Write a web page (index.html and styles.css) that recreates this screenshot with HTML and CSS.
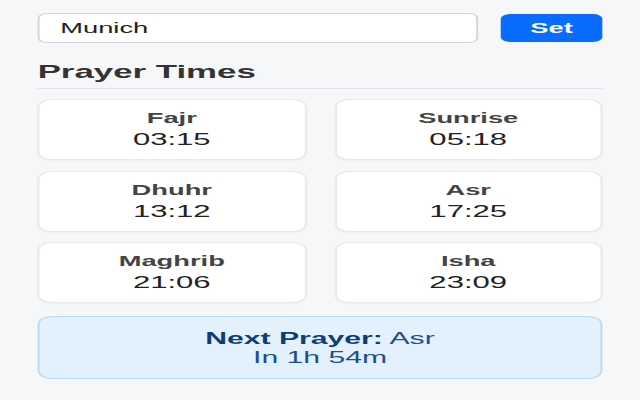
FILE: index.html
```
<!DOCTYPE html>
<html lang="en">
<head>
<meta charset="utf-8">
<title>Prayer Times</title>
<link rel="stylesheet" href="styles.css">
</head>
<body>
<div class="app">
  <div class="city-row">
    <input class="city-input" type="text" value="Munich">
    <button class="set-btn">Set</button>
  </div>
  <h2 class="title">Prayer Times</h2>
  <div class="grid">
    <div class="card"><div class="name">Fajr</div><div class="time">03:15</div></div>
    <div class="card"><div class="name">Sunrise</div><div class="time">05:18</div></div>
    <div class="card"><div class="name">Dhuhr</div><div class="time">13:12</div></div>
    <div class="card"><div class="name">Asr</div><div class="time">17:25</div></div>
    <div class="card"><div class="name">Maghrib</div><div class="time">21:06</div></div>
    <div class="card"><div class="name">Isha</div><div class="time">23:09</div></div>
  </div>
  <div class="next">
    <div class="next-line"><strong>Next Prayer:</strong> Asr</div>
    <div class="next-line">In 1h 54m</div>
  </div>
</div>
</body>
</html>
```
FILE: styles.css
```
html, body {
  margin: 0;
  padding: 0;
  background: #f6f7f9;
  font-family: "Liberation Sans", Arial, sans-serif;
  color: #333;
}
.app {
  width: 340px;
  box-sizing: border-box;
  padding: 13px 20px 0;
  transform: scaleX(1.88235);
  transform-origin: 0 0;
}
.city-row {
  display: flex;
  align-items: center;
  gap: 12px;
}
.city-input {
  flex: 1;
  min-width: 0;
  height: 30px;
  box-sizing: border-box;
  border: 1px solid #d2d4d8;
  border-radius: 5px;
  padding: 0 11px;
  font-family: inherit;
  font-size: 14.5px;
  color: #222;
  background: #fff;
  outline: none;
}
.set-btn {
  width: 54px;
  height: 28px;
  border: none;
  border-radius: 5px;
  background: #0a6cff;
  color: #fff;
  font-family: inherit;
  font-weight: bold;
  font-size: 14.5px;
  padding: 0;
}
.title {
  margin: 18px 0 0;
  padding-bottom: 6px;
  border-bottom: 1px solid #e1e3e7;
  font-size: 18.5px;
  font-weight: bold;
  color: #333;
  line-height: 21px;
}
.grid {
  margin-top: 10px;
  display: grid;
  grid-template-columns: 1fr 1fr;
  gap: 10.5px 15px;
}
.card {
  background: #fff;
  border: 1px solid #e8e9ec;
  border-radius: 8px;
  padding: 10px;
  text-align: center;
  box-shadow: 0 1px 2px rgba(0,0,0,0.04);
}
.name {
  font-size: 14.5px;
  font-weight: bold;
  line-height: 16px;
  color: #444;
}
.time {
  margin-top: 4px;
  font-size: 16.5px;
  line-height: 19px;
  color: #222;
}
.next {
  margin-top: 13px;
  background: #e3f1fd;
  border: 1px solid #b9d9f6;
  border-radius: 8px;
  padding: 12px 10px 11px;
  text-align: center;
  color: #1d4f8c;
}
.next-line {
  font-size: 16px;
  line-height: 19px;
}
.next-line strong {
  color: #0f3d78;
}
```
